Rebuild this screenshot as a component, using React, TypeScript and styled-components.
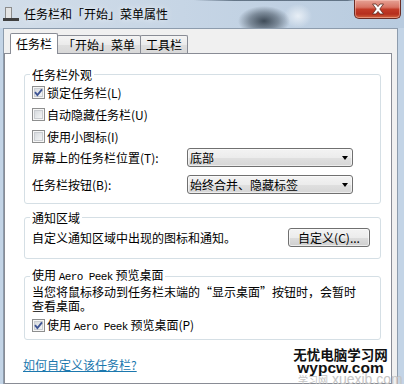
import * as React from 'react'
import styled, { createGlobalStyle } from 'styled-components'

type CheckProps = { checked?: boolean; children: React.ReactNode }

const CheckItem = ({ checked, children }: CheckProps) => (
	<CheckRow>
		<CheckBox>
			{checked && (
				<svg width="9" height="9" viewBox="0 0 9 9">
					<path d="M1 4.2 L3.4 7 L8 1.4" fill="none" stroke="#3e5494" strokeWidth="1.9" />
				</svg>
			)}
		</CheckBox>
		<span>{children}</span>
	</CheckRow>
)

export default function App() {
	return (
		<>
			<GlobalStyle />
			<Window>
				<TitleBar>
					<svg width="16" height="16" viewBox="0 0 16 16">
						<rect x="2.5" y="1.5" width="6" height="11" fill="#e4e4e4" stroke="#8c8c8c" />
						<rect x="0" y="12" width="16" height="3" fill="#3f3f3f" />
					</svg>
					<Caption>任务栏和「开始」菜单属性</Caption>
					<CloseButton aria-label="关闭">
						<svg width="16" height="12" viewBox="0 0 16 12">
							<path
								d="M2.5 1 H6 L8 3.6 L10 1 H13.5 L9.8 6 L13.5 11 H10 L8 8.4 L6 11 H2.5 L6.2 6 Z"
								fill="#fff"
								stroke="#5a2820"
								strokeWidth="0.8"
								strokeLinejoin="round"
							/>
						</svg>
					</CloseButton>
				</TitleBar>
				<Body>
					<Client>
						<TabStrip>
							<Tab $active>任务栏</Tab>
							<Tab>「开始」菜单</Tab>
							<Tab>工具栏</Tab>
						</TabStrip>
						<TabPanel>
							<GroupBox>
								<GroupTitle>任务栏外观</GroupTitle>
								<CheckList>
									<CheckItem checked>锁定任务栏(L)</CheckItem>
									<CheckItem>自动隐藏任务栏(U)</CheckItem>
									<CheckItem>使用小图标(I)</CheckItem>
								</CheckList>
								<SelectList>
									<SelectRow>
										<span>屏幕上的任务栏位置(T):</span>
										<Combo>
											<span>底部</span>
											<DropArrow />
										</Combo>
									</SelectRow>
									<SelectRow>
										<span>任务栏按钮(B):</span>
										<Combo>
											<span>始终合并、隐藏标签</span>
											<DropArrow />
										</Combo>
									</SelectRow>
								</SelectList>
							</GroupBox>

							<GroupBox $mt={6}>
								<GroupTitle>通知区域</GroupTitle>
								<NotifyRow>
									<span>自定义通知区域中出现的图标和通知。</span>
									<PushButton>自定义(C)...</PushButton>
								</NotifyRow>
							</GroupBox>

							<GroupBox $mt={8}>
								<GroupTitle>
									使用 <Latin>Aero Peek</Latin> 预览桌面
								</GroupTitle>
								<Note>
									当您将鼠标移动到任务栏末端的“显示桌面”按钮时，会暂时
									<br />
									查看桌面。
								</Note>
								<PeekCheck>
									<CheckItem checked>
										使用 <Latin>Aero Peek</Latin> 预览桌面(P)
									</CheckItem>
								</PeekCheck>
							</GroupBox>

							<HelpLink href="#">如何自定义该任务栏?</HelpLink>
						</TabPanel>
					</Client>
				</Body>

				<Watermark>
					<MarkTitle>无忧电脑学习网</MarkTitle>
					<MarkDomain>wypcw.com</MarkDomain>
				</Watermark>
				<FaintMark>
					<small>学习网</small> xuexib.com
				</FaintMark>
			</Window>
		</>
	)
}

const GlobalStyle = createGlobalStyle`
	html, body {
		margin: 0;
		padding: 0;
	}

	body {
		font-family: 'Noto Sans CJK SC', 'Noto Sans', sans-serif;
		font-size: 12px;
		color: #000;
		background: #c4d5e6;
	}
`

const Window = styled.div`
	position: relative;
	width: 404px;
	height: 384px;
	overflow: hidden;
	display: flex;
	flex-direction: column;
	background: #c3d4e6;
`

const TitleBar = styled.div`
	height: 28px;
	flex: 0 0 28px;
	display: flex;
	align-items: center;
	padding-left: 3px;
	box-sizing: border-box;
	background:
		linear-gradient(to right, rgba(60, 78, 96, 0) 48%, rgba(60, 78, 96, 0.7) 58%, rgba(60, 78, 96, 0.7) 86%, rgba(60, 78, 96, 0) 88%) top / 100% 1px no-repeat,
		radial-gradient(ellipse 26px 15px at 264px 21px, rgba(40, 52, 64, 0.85), rgba(40, 52, 64, 0.45) 55%, rgba(40, 52, 64, 0) 100%),
		radial-gradient(ellipse 14px 12px at 298px 16px, rgba(236, 242, 248, 0.9), rgba(236, 242, 248, 0)),
		linear-gradient(to right, #d2dde9, #c6d5e5 45%, #b8cbdf);
`

const Caption = styled.span`
	margin-left: 5px;
	line-height: 16px;
	text-shadow: 0 0 6px rgba(255, 255, 255, 0.9);
`

const CloseButton = styled.button`
	align-self: flex-start;
	margin-left: auto;
	margin-right: 3px;
	width: 47px;
	height: 19px;
	padding: 0;
	display: flex;
	align-items: center;
	justify-content: center;
	box-sizing: border-box;
	border: 1px solid #6a2c24;
	border-top: none;
	border-radius: 0 0 5px 5px;
	background: linear-gradient(#e6a295 0%, #d87464 40%, #c23b27 52%, #b52f1e 78%, #d2653f 100%);
	box-shadow: inset 0 0 0 1px rgba(255, 210, 200, 0.45);
`

const Body = styled.div`
	flex: 1;
	display: flex;
	padding: 0 6px 0 3px;
`

const Client = styled.div`
	flex: 1;
	display: flex;
	flex-direction: column;
	background: #f0f0f0;
	border: 1px solid #8d9cad;
	border-bottom: none;
	padding-right: 5px;
`

const TabStrip = styled.div`
	height: 24px;
	flex: 0 0 24px;
	display: flex;
	align-items: flex-end;
	padding-left: 6px;
`

const Tab = styled.div<{ $active?: boolean }>`
	position: relative;
	z-index: ${(p) => (p.$active ? 1 : 0)};
	height: ${(p) => (p.$active ? '21px' : '18px')};
	margin-bottom: ${(p) => (p.$active ? '-1px' : '0')};
	padding: 0 5px;
	box-sizing: border-box;
	display: flex;
	align-items: center;
	line-height: 16px;
	border: 1px solid #898c95;
	border-bottom: none;
	border-radius: 2px 2px 0 0;
	background: ${(p) => (p.$active ? '#ffffff' : 'linear-gradient(#f4f4f4, #ebebeb 50%, #dfdfdf 51%, #d8d8d8)')};

	& + & {
		margin-left: -1px;
	}
`

const TabPanel = styled.div`
	flex: 1;
	display: flex;
	flex-direction: column;
	background: #ffffff;
	border: 1px solid #898c95;
	padding: 13px 10px 0 19px;
`

const GroupBox = styled.fieldset<{ $mt?: number }>`
	margin: ${(p) => p.$mt ?? 0}px 0 0;
	min-width: 0;
	padding: 0 8px 0 7px;
	border: 1px solid #d5dfe5;
	border-radius: 3px;
`

const GroupTitle = styled.legend`
	margin-left: -2px;
	padding: 0 2px;
	line-height: 15px;
`

const Latin = styled.span`
	font-family: 'Liberation Mono', monospace;
	font-size: 11px;
	letter-spacing: -0.6px;
`

const CheckList = styled.div`
	display: flex;
	flex-direction: column;
	gap: 1px;
`

const CheckRow = styled.label`
	height: 21px;
	display: flex;
	align-items: center;
	gap: 2px;
	line-height: 16px;
`

const CheckBox = styled.span`
	width: 13px;
	height: 13px;
	flex: 0 0 13px;
	box-sizing: border-box;
	display: flex;
	align-items: center;
	justify-content: center;
	border: 1px solid #8e8f8f;
	background: linear-gradient(135deg, #cfd3d8, #eef0f1 70%, #f8f8f8);
	box-shadow: inset 0 0 0 1px #f6f6f6, inset 0 0 0 2px #c9ccd0;
`

const SelectList = styled.div`
	display: flex;
	flex-direction: column;
	gap: 6px;
	padding-bottom: 8px;
`

const SelectRow = styled.div`
	height: 21px;
	display: grid;
	grid-template-columns: 155px 166px;
	align-items: center;
	line-height: 16px;
`

const Combo = styled.div`
	height: 19px;
	box-sizing: border-box;
	display: flex;
	align-items: center;
	justify-content: space-between;
	padding: 0 4px 0 2px;
	border: 1px solid #707070;
	border-radius: 3px;
	background: linear-gradient(#f3f3f3, #ececec 50%, #e0e0e0 51%, #d6d6d6);
	box-shadow: inset 0 0 0 1px rgba(255, 255, 255, 0.55);
	line-height: 16px;
`

const DropArrow = styled.span`
	width: 0;
	height: 0;
	border-left: 3.5px solid transparent;
	border-right: 3.5px solid transparent;
	border-top: 4px solid #000;
`

const NotifyRow = styled.div`
	display: flex;
	align-items: center;
	justify-content: space-between;
	padding: 3px 2px 11px 0;
	line-height: 16px;
`

const PushButton = styled.button`
	width: 82px;
	height: 19px;
	padding: 0;
	font: inherit;
	line-height: 16px;
	color: #000;
	border: 1px solid #707070;
	border-radius: 3px;
	background: linear-gradient(#f3f3f3, #ececec 50%, #dddddd 51%, #cfcfcf);
	box-shadow: inset 0 0 0 1px rgba(255, 255, 255, 0.6);
`

const Note = styled.p`
	margin: 0;
	line-height: 14px;
	white-space: nowrap;
`

const PeekCheck = styled.div`
	margin-top: 2px;
	padding-bottom: 3px;
`

const HelpLink = styled.a`
	align-self: flex-start;
	margin: 16px 0 0 -1px;
	line-height: 17px;
	color: #1c78ae;
	text-decoration: underline;
`

const Watermark = styled.div`
	position: absolute;
	top: 347px;
	left: 293px;
	width: 95px;
	display: flex;
	flex-direction: column;
	align-items: center;
	z-index: 2;
`

const MarkTitle = styled.div`
	font-family: 'Noto Sans CJK SC', sans-serif;
	font-weight: 700;
	font-size: 13.5px;
	line-height: 14px;
	color: #111;
`

const MarkDomain = styled.div`
	font-family: 'Liberation Sans', Arial, sans-serif;
	font-weight: 700;
	font-size: 15.5px;
	line-height: 14px;
	color: #111;
`

const FaintMark = styled.div`
	position: absolute;
	top: 372px;
	left: 298px;
	white-space: nowrap;
	font-family: 'Liberation Sans', 'Noto Sans CJK SC', sans-serif;
	font-size: 14px;
	line-height: 14px;
	color: #c4c4c4;
	z-index: 1;

	small {
		font-size: 10px;
	}
`
